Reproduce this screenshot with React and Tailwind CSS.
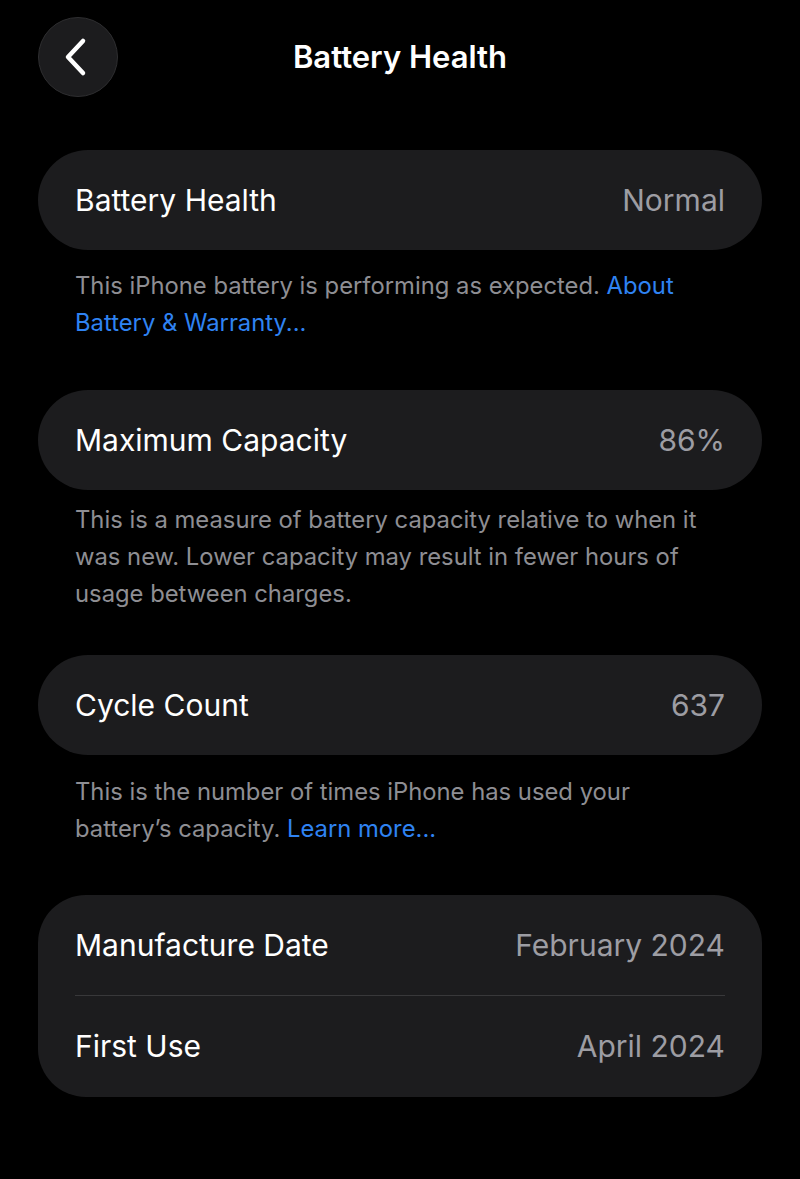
import React from 'react';

const font = { fontFamily: 'Inter, "Noto Sans", sans-serif' };

function Row({ label, value, className = 'h-[100px]' }) {
  return (
    <div className={`flex items-center justify-between px-[37px] ${className}`}>
      <span className="text-[30px] text-white">{label}</span>
      <span className="text-[30px] text-[#9d9da3]">{value}</span>
    </div>
  );
}

function Card({ children, rounded = 'rounded-full' }) {
  return <div className={`mx-[38px] bg-[#1c1c1e] ${rounded}`}>{children}</div>;
}

function Footer({ children, className = '' }) {
  return (
    <p className={`px-[75px] text-[23.8px] leading-[37px] text-[#8e8e93] ${className}`}>
      {children}
    </p>
  );
}

function Link({ children }) {
  return <span className="text-[#2f83f2]">{children}</span>;
}

export default function App() {
  return (
    <div className="min-h-[1179px] w-[800px] bg-black" style={font}>
      <header className="relative flex h-[150px] items-start justify-center">
        <button className="absolute left-[38px] top-[17px] flex h-[80px] w-[80px] items-center justify-center rounded-full border border-[#2e2e30] bg-[#1c1c1e]">
          <svg width="26" height="40" viewBox="0 0 26 40" fill="none" className="-ml-[3px]">
            <path d="M19 4 L4 20 L19 36" stroke="white" strokeWidth="4.5" strokeLinecap="round" strokeLinejoin="round" />
          </svg>
        </button>
        <h1 className="mt-[38px] text-[31px] font-semibold leading-[38px] text-white">
          Battery Health
        </h1>
      </header>

      <Card>
        <Row label="Battery Health" value="Normal" />
      </Card>
      <Footer className="pt-[17px]">
        This iPhone battery is performing as expected. <Link>About</Link>
        <br />
        <Link>Battery &amp; Warranty...</Link>
      </Footer>

      <div className="mt-[49px]">
        <Card>
          <Row label="Maximum Capacity" value="86%" />
        </Card>
      </div>
      <Footer className="pt-[11px] leading-[37.5px]">
        This is a measure of battery capacity relative to when it
        <br />
        was new. Lower capacity may result in fewer hours of
        <br />
        usage between charges.
      </Footer>

      <div className="mt-[43px]">
        <Card>
          <Row label="Cycle Count" value="637" />
        </Card>
      </div>
      <Footer className="pt-[18px]">
        This is the number of times iPhone has used your
        <br />
        battery’s capacity. <Link>Learn more...</Link>
      </Footer>

      <div className="mt-[48px]">
        <Card rounded="rounded-[48px]">
          <Row label="Manufacture Date" value="February 2024" />
          <div className="mx-[37px] h-px bg-[#38383a]" />
          <Row label="First Use" value="April 2024" className="h-[101px]" />
        </Card>
      </div>
    </div>
  );
}
